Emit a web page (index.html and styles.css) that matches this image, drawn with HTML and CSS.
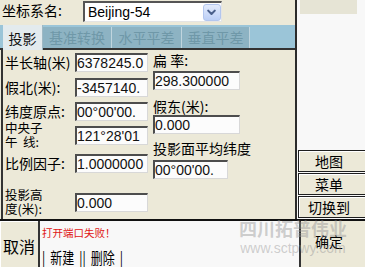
FILE: index.html
```html
<!DOCTYPE html>
<html>
<head>
<meta charset="utf-8">
<link rel="stylesheet" href="styles.css">
</head>
<body>
<div class="screen">
  <div class="top">
    <div class="main">
      <div class="header">
        <div class="hlabel">坐标系名:</div>
        <div class="combo">
          <span class="combo-text">Beijing-54</span>
          <span class="drop"><svg width="18" height="17" viewBox="0 0 18 17"><path d="M5.5 6.5 L9 10 L12.5 6.5" fill="none" stroke="#4a5f8a" stroke-width="2.2" stroke-linecap="round" stroke-linejoin="round"/></svg></span>
        </div>
      </div>
      <div class="tabs">
        <div class="tab active">投影</div>
        <div class="tab t2">基准转换</div>
        <div class="tab t3">水平平差</div>
        <div class="tab t4">垂直平差</div>
      </div>
      <div class="panel">
        <div class="col-left">
          <div class="row r1"><div class="lbl">半长轴(米)</div><div class="inp">6378245.0</div></div>
          <div class="row r2"><div class="lbl">假北(米):</div><div class="inp">-3457140.</div></div>
          <div class="row r3"><div class="lbl">纬度原点:</div><div class="inp">00°00'00.</div></div>
          <div class="row r4"><div class="lbl two">中央子<br>午&nbsp;&nbsp;线:</div><div class="inp">121°28'01</div></div>
          <div class="row r5"><div class="lbl">比例因子:</div><div class="inp">1.0000000</div></div>
          <div class="row r6"><div class="lbl two">投影高<br>度(米):</div><div class="inp">0.000</div></div>
        </div>
        <div class="col-right">
          <div class="rlbl l1">扁 率:</div>
          <div class="inp rinp i1">298.300000</div>
          <div class="rlbl l2">假东(米):</div>
          <div class="inp rinp i2">0.000</div>
          <div class="rlbl l3">投影面平均纬度</div>
          <div class="inp rinp i3">00°00'00.</div>
        </div>
      </div>
    </div>
    <div class="side">
      <div class="side-bar"></div>
      <div class="side-buttons">
        <div class="sbtn">地图</div>
        <div class="sbtn">菜单</div>
        <div class="sbtn">切换到</div>
      </div>
    </div>
  </div>
  <div class="bottom">
    <div class="cancel">取消</div>
    <div class="msg">
      <div class="err">打开端口失败！</div>
      <div class="links"><span>|</span><span>新建</span><span>||</span><span>删除</span><span>|</span></div>
    </div>
    <div class="ok">确定</div>
  </div>
  <div class="watermark">
    <div class="wm1">四川拓普伟业</div>
    <div class="wm2">www.sctpwy.com</div>
  </div>
</div>
</body>
</html>
```

FILE: styles.css
```css
html, body {
  margin: 0;
  padding: 0;
}
body {
  font-family: "Noto Sans CJK SC", sans-serif;
  color: #000;
}
.screen {
  position: relative;
  width: 365px;
  height: 267px;
  overflow: hidden;
  background: #f8f8f8;
}
.top {
  display: flex;
  height: 221px;
  box-sizing: border-box;
  border-bottom: 2px solid #111;
}
.main {
  width: 297px;
  box-sizing: border-box;
  border-right: 2px solid #2b2b2b;
  background: #ece9d8;
  display: flex;
  flex-direction: column;
}
.header {
  height: 25px;
  display: flex;
  align-items: flex-start;
}
.hlabel {
  width: 81px;
  padding-left: 2px;
  font-size: 14px;
  line-height: 20px;
}
.combo {
  margin-top: 1px;
  width: 139px;
  height: 21px;
  box-sizing: border-box;
  background: #fff;
  border-top: 2px solid #555;
  border-left: 2px solid #555;
  border-right: 1px solid #e4e4e4;
  border-bottom: 1px solid #e4e4e4;
  display: flex;
  align-items: center;
}
.combo-text {
  padding-left: 3px;
  font-family: "Liberation Sans", Arial, sans-serif;
  font-size: 14px;
  line-height: 16px;
}
.drop {
  margin-left: auto;
  margin-right: 0;
  width: 18px;
  height: 17px;
  box-sizing: border-box;
  border: 1px solid #b3c6ee;
  border-radius: 3px;
  background: linear-gradient(#e3ebfc, #bccff6);
  display: flex;
}
.drop svg {
  margin: -1px 0 0 -1px;
}
.tabs {
  height: 25px;
  box-sizing: border-box;
  border-bottom: 2px solid #333;
  background: #9bc5d8;
  display: flex;
  align-items: flex-end;
  padding-left: 3px;
}
.tab {
  height: 21px;
  box-sizing: border-box;
  font-size: 14px;
  line-height: 21px;
  text-align: center;
  color: #6f98a8;
  background: #8db3c3;
  border-right: 1px solid #c0d5de;
}
.tab.active {
  width: 40px;
  height: 25px;
  margin-bottom: -2px;
  line-height: 26px;
  color: #111;
  background: #e3ebee;
  border-right: 1px solid #9fb9c4;
  position: relative;
  z-index: 1;
}
.t2 { width: 69px; }
.t3 { width: 70px; }
.t4 { width: 68px; }
.panel {
  flex: 1;
  display: flex;
  margin-left: 1px;
  border-left: 2px solid #333;
  background: #ece9d8;
}
.col-left {
  width: 145px;
  padding-left: 2px;
  box-sizing: border-box;
  display: flex;
  flex-direction: column;
}
.row {
  display: flex;
  align-items: center;
}
.lbl {
  width: 70px;
  font-size: 14px;
  line-height: 19px;
  white-space: nowrap;
}
.lbl.two {
  font-size: 12.5px;
  line-height: 14px;
}
.r1 { margin-top: 3px; }
.r2 { margin-top: 6px; }
.r3 { margin-top: 5px; }
.r4 { margin-top: 0; height: 28px; }
.r5 { margin-top: 5px; }
.r6 { margin-top: 15px; height: 28px; }
.inp {
  width: 73px;
  height: 19px;
  box-sizing: border-box;
  background: #fcfcfc;
  border-top: 2px solid #4d4d4d;
  border-left: 2px solid #4d4d4d;
  border-right: 1px solid #d8d8d8;
  border-bottom: 1px solid #d8d8d8;
  font-family: "Liberation Sans", Arial, sans-serif;
  font-size: 14px;
  line-height: 16px;
  color: #111;
  overflow: hidden;
  white-space: nowrap;
}
.col-right {
  margin-left: 5px;
  display: flex;
  flex-direction: column;
}
.rlbl {
  font-size: 14px;
  line-height: 18px;
  white-space: nowrap;
}
.rinp { width: 87px; }
.l1 { margin-top: 1px; }
.i1 { margin-top: 2px; }
.l2 { margin-top: 7px; }
.i2 { margin-top: 0; }
.l3 { margin-top: 5px; }
.i3 { margin-top: 3px; width: 75px; }
.side {
  flex: 1;
  display: flex;
  flex-direction: column;
  background: #f8f8f8;
}
.side-bar {
  margin: 0 8px 0 3px;
  height: 14px;
  background: #e6e4d5;
}
.side-buttons {
  margin-top: auto;
  display: flex;
  flex-direction: column;
  padding-left: 1px;
}
.sbtn {
  height: 22px;
  margin-bottom: 1px;
  box-sizing: border-box;
  border: 1px solid #1e1e1e;
  border-right: none;
  background: #ece9d8;
  box-shadow: inset 1px 1px 0 #fff;
  font-size: 14px;
  line-height: 20px;
  text-align: center;
  padding-right: 6px;
}
.bottom {
  flex: 1;
  height: 46px;
  display: flex;
}
.cancel {
  width: 40px;
  box-sizing: border-box;
  background: #ece9d8;
  border-right: 2px solid #333;
  box-shadow: inset 1px 1px 0 #fff;
  font-size: 16px;
  line-height: 46px;
  text-align: center;
  padding-top: 2px;
}
.msg {
  flex: 1;
  display: flex;
  flex-direction: column;
  padding-left: 2px;
}
.err {
  margin-top: 6px;
  font-size: 10.5px;
  line-height: 12px;
  color: #e01515;
}
.links {
  margin-top: 9px;
  display: flex;
  gap: 5px;
  font-size: 12px;
  line-height: 14px;
  transform: scaleY(1.3);
  transform-origin: top left;
}
.ok {
  width: 66px;
  box-sizing: border-box;
  border-left: 2px solid #333;
  background: #ece9d8;
  font-size: 14px;
  line-height: 40px;
  text-align: center;
  padding-right: 8px;
}
.watermark {
  position: absolute;
  left: 236px;
  top: 216px;
  width: 114px;
  text-align: center;
  color: rgba(150, 150, 150, 0.45);
  pointer-events: none;
}
.wm1 {
  font-size: 18px;
  font-weight: 700;
  line-height: 24px;
}
.wm2 {
  font-family: "Liberation Sans", Arial, sans-serif;
  font-size: 14px;
  line-height: 16px;
}
```
